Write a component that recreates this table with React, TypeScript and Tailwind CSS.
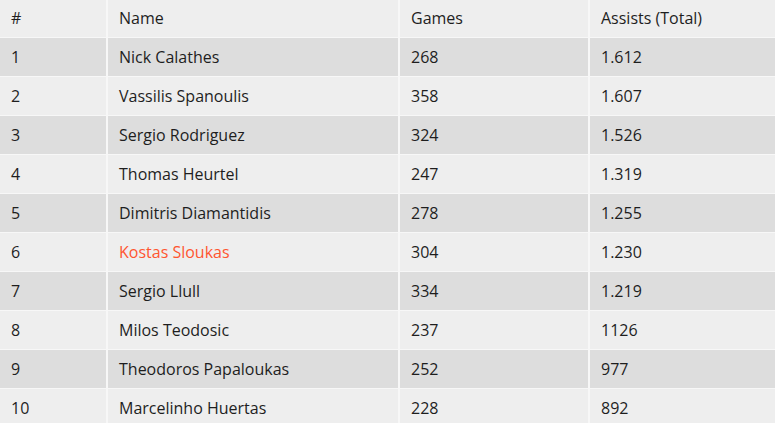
import React from "react";

const rows: [string, string, string, string][] = [
  ["1", "Nick Calathes", "268", "1.612"],
  ["2", "Vassilis Spanoulis", "358", "1.607"],
  ["3", "Sergio Rodriguez", "324", "1.526"],
  ["4", "Thomas Heurtel", "247", "1.319"],
  ["5", "Dimitris Diamantidis", "278", "1.255"],
  ["6", "Kostas Sloukas", "304", "1.230"],
  ["7", "Sergio Llull", "334", "1.219"],
  ["8", "Milos Teodosic", "237", "1126"],
  ["9", "Theodoros Papaloukas", "252", "977"],
  ["10", "Marcelinho Huertas", "228", "892"],
];

const cols = "grid grid-cols-[106px_290px_188px_185px] gap-x-[2px]";

export default function App() {
  return (
    <div
      className="w-[775px] h-[423px] overflow-hidden bg-[#f7f7f7] text-[16px] text-[#1e1e1e]"
      style={{ fontFamily: '"Open Sans", "Noto Sans", sans-serif' }}
    >
      <div className="flex flex-col gap-y-[1px]">
        <div className={cols + " h-[37px]"}>
          {["#", "Name", "Games", "Assists (Total)"].map((h) => (
            <div key={h} className="bg-[#eeeeee] pl-[11px] pb-[2px] flex items-center">
              {h}
            </div>
          ))}
        </div>
        {rows.map((r, i) => (
          <div key={r[0]} className={cols + " h-[38px]"}>
            {r.map((c, j) => (
              <div
                key={j}
                className={
                  (i % 2 === 0 ? "bg-[#dddddd]" : "bg-[#eeeeee]") +
                  " pl-[11px] pb-[1px] flex items-center" +
                  (r[0] === "6" && j === 1 ? " text-[#ff5530]" : "")
                }
              >
                {c}
              </div>
            ))}
          </div>
        ))}
      </div>
    </div>
  );
}
